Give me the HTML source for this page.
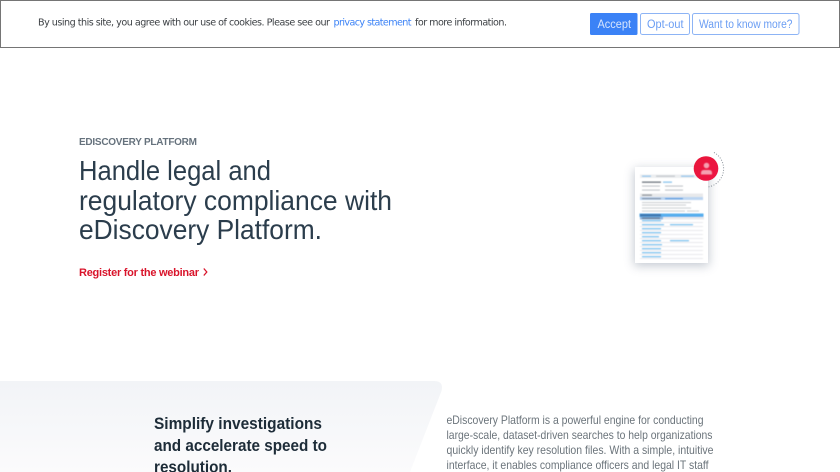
<!DOCTYPE html>
<html lang="en">
<head>
<meta charset="utf-8">
<title>eDiscovery Platform</title>
<style>
html,body{margin:0;padding:0;width:840px;height:472px;overflow:hidden;background:#fff}
svg{display:block}
text{font-family:"Liberation Sans",sans-serif}
.c{font-family:"DejaVu Sans",sans-serif;font-size:9.600px;fill:#3d4145}
.b{font-size:11.500px}
.h{font-size:28px;fill:#2b3d4c}
.s{font-size:16.500px;font-weight:bold;fill:#1d2c38}
.p{font-size:11.800px;fill:#6b747b}
</style>
</head>
<body>
<svg width="840" height="472" viewBox="0 0 840 472" xmlns="http://www.w3.org/2000/svg">
<defs>
<linearGradient id="g" x1="0" y1="0" x2="0" y2="1"><stop offset="0" stop-color="#f2f4f7"/><stop offset="1" stop-color="#fbfbfc"/></linearGradient>
<linearGradient id="r" x1="0" y1="0" x2="1" y2="1"><stop offset="0" stop-color="#e8173a"/><stop offset="1" stop-color="#ee1344"/></linearGradient>
<filter id="sh" x="-30%" y="-30%" width="160%" height="160%"><feGaussianBlur stdDeviation="5"/></filter>
<filter id="bl"><feGaussianBlur stdDeviation="0.45"/></filter>
</defs>

<!-- cookie banner -->
<rect x="0.5" y="0.5" width="839" height="47" fill="#fff" stroke="#757575"/>
<text class="c" x="38" y="25.500" textLength="292" lengthAdjust="spacing">By using this site, you agree with our use of cookies. Please see our</text>
<text class="c" x="333.500" y="25.500" textLength="78" lengthAdjust="spacing" style="fill:#3b82f6">privacy statement</text>
<text class="c" x="415" y="25.500" textLength="92" lengthAdjust="spacing">for more information.</text>

<rect x="590" y="13" width="47.500" height="22" rx="1.500" fill="#3b82f6"/>
<text class="b" x="597.500" y="28" textLength="33.500" lengthAdjust="spacingAndGlyphs" fill="#d8e6fd">Accept</text>
<rect x="640.500" y="13.500" width="49" height="21" rx="2" fill="#fff" stroke="#8db4f5"/>
<text class="b" x="647" y="28" textLength="36.500" lengthAdjust="spacingAndGlyphs" fill="#6a9df3">Opt-out</text>
<rect x="692.500" y="13.500" width="106.500" height="21" rx="2" fill="#fff" stroke="#8db4f5"/>
<text class="b" x="699" y="28" textLength="93.500" lengthAdjust="spacingAndGlyphs" fill="#6a9df3">Want to know more?</text>

<!-- hero -->
<text x="79" y="145" font-size="10" font-weight="bold" fill="#66727d" textLength="118" lengthAdjust="spacing">EDISCOVERY PLATFORM</text>
<text class="h" x="79" y="180" textLength="192" lengthAdjust="spacingAndGlyphs">Handle legal and</text>
<text class="h" x="79" y="210" textLength="313" lengthAdjust="spacingAndGlyphs">regulatory compliance with</text>
<text class="h" x="79" y="239" textLength="243" lengthAdjust="spacingAndGlyphs">eDiscovery Platform.</text>
<text x="79" y="276" font-size="11" font-weight="bold" fill="#d9142b" textLength="120" lengthAdjust="spacing">Register for the webinar</text>
<path d="M203.800 268.500 L206.800 272 L203.800 275.500" fill="none" stroke="#d9142b" stroke-width="1.300"/>

<!-- illustration -->
<rect x="634" y="169" width="75" height="97" fill="#7f8b9c" opacity=".45" filter="url(#sh)"/>
<rect x="635" y="167" width="73" height="96" fill="#fff"/>
<g filter="url(#bl)">
<rect x="640" y="174.500" width="64" height="3.500" fill="#eceef0"/>
<g fill="#8cc4ec">
<rect x="642" y="175.500" width="9" height="1.300"/><rect x="681" y="175.500" width="13" height="1.300"/><rect x="663" y="181.500" width="9" height="1.300"/>
</g>
<rect x="656" y="175.500" width="19" height="1.300" fill="#c3c8cd"/>
<rect x="642" y="181.500" width="19" height="1.300" fill="#6d757e"/>
<g fill="#c0c4c9">
<rect x="642" y="185.500" width="18" height="1.100"/><rect x="665" y="185.500" width="18" height="1.100"/>
<rect x="642" y="189.500" width="18" height="1.100"/><rect x="665" y="189.500" width="18" height="1.100"/>
</g>
<rect x="640" y="193.500" width="63" height="3.500" fill="#e8e9eb"/>
<rect x="642" y="194.500" width="10" height="1.200" fill="#7f8790"/>
<rect x="640" y="197" width="63" height="3" fill="#bcd5f2"/>
<rect x="642" y="198" width="19" height="1.200" fill="#7d8b9d"/>
<rect x="665" y="198" width="18" height="1.200" fill="#4f96dc"/>
<g fill="#cdd0d4">
<rect x="642" y="202" width="49" height="1.100"/><rect x="642" y="204.500" width="44" height="1.100"/>
<rect x="642" y="207.500" width="49" height="1.100"/><rect x="642" y="210.500" width="43" height="1.100"/><rect x="687" y="210.500" width="12" height="1.100"/>
</g>
<rect x="639.500" y="213.500" width="64" height="3.500" fill="#56aeee"/>
<rect x="640" y="214" width="21" height="2.500" fill="#3f78b0"/>
<rect x="640" y="217" width="64" height="2.500" fill="#e9eaec"/>
<rect x="640" y="217" width="23" height="2.500" fill="#8fb4dc"/>
<rect x="642" y="217.500" width="18" height="1.200" fill="#5d7389"/>
<g fill="#e9eaec">
<rect x="640" y="222" width="63" height="1"/><rect x="640" y="226" width="63" height="1"/><rect x="640" y="230" width="63" height="1"/>
<rect x="640" y="234" width="63" height="1"/><rect x="640" y="238" width="63" height="1"/><rect x="640" y="242" width="63" height="1"/>
<rect x="640" y="246" width="63" height="1"/><rect x="640" y="250" width="63" height="1"/><rect x="640" y="254" width="63" height="1"/>
<rect x="640" y="258" width="63" height="1"/>
</g>
<g fill="#86c6f0">
<rect x="642" y="220" width="19" height="1.400"/>
<rect x="642" y="224" width="22" height="1.400"/><rect x="670" y="224" width="23" height="1.400"/>
<rect x="642" y="228" width="19" height="1.400"/>
<rect x="642" y="232" width="19" height="1.400"/>
<rect x="642" y="236" width="17" height="1.400"/>
<rect x="642" y="240" width="19" height="1.400"/><rect x="670" y="240" width="19" height="1.400"/>
<rect x="642" y="244" width="20" height="1.400"/>
<rect x="642" y="248" width="19" height="1.400"/>
<rect x="642" y="252" width="19" height="1.400"/>
<rect x="642" y="256" width="19" height="1.400"/>
</g>
</g>
<path d="M714 152.500 A18.500 18.500 0 0 1 708 187" fill="none" stroke="#8b939b" stroke-width="1" stroke-dasharray="1 1.600"/>
<circle cx="706" cy="168.500" r="12.300" fill="url(#r)"/>
<g filter="url(#bl)">
<circle cx="706.500" cy="165.500" r="2.800" fill="#f5a0b0"/>
<path d="M701 174.500 v-1.500 q0-3 3-3 h5 q3 0 3 3 v1.500 z" fill="#f5a0b0"/>
</g>

<!-- lower section -->
<path d="M0 381 H434 Q444 381 441.500 391 L410 472 H0 Z" fill="url(#g)"/>
<text class="s" x="154" y="429" textLength="168" lengthAdjust="spacingAndGlyphs">Simplify investigations</text>
<text class="s" x="154" y="451" textLength="173" lengthAdjust="spacingAndGlyphs">and accelerate speed to</text>
<text class="s" x="154" y="472.500" textLength="78" lengthAdjust="spacingAndGlyphs">resolution.</text>
<text class="p" x="446.500" y="424" textLength="257" lengthAdjust="spacingAndGlyphs">eDiscovery Platform is a powerful engine for conducting</text>
<text class="p" x="446.500" y="439" textLength="266" lengthAdjust="spacingAndGlyphs">large-scale, dataset-driven searches to help organizations</text>
<text class="p" x="446.500" y="454" textLength="267" lengthAdjust="spacingAndGlyphs">quickly identify key resolution files. With a simple, intuitive</text>
<text class="p" x="446.500" y="469" textLength="262" lengthAdjust="spacingAndGlyphs">interface, it enables compliance officers and legal IT staff</text>
</svg>
</body>
</html>
